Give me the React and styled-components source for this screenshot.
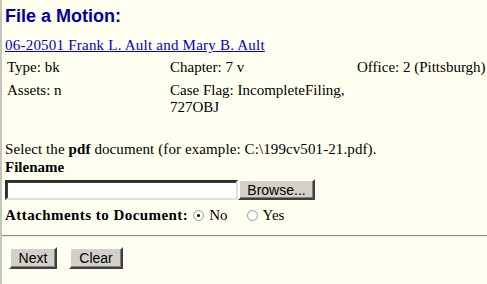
import React from 'react';
import styled, { createGlobalStyle } from 'styled-components';

const GlobalStyle = createGlobalStyle`
  html, body {
    margin: 0;
    padding: 0;
    background: #fffff0;
  }
  body {
    border-left: 2px solid #c4c4bc;
    min-height: 284px;
    box-sizing: border-box;
    font-family: "Liberation Serif", "Times New Roman", serif;
    font-size: 15px;
    line-height: 17px;
    color: #000;
  }
`;

const Page = styled.div`
  padding: 6px 0 0 3px;
`;

const Title = styled.h3`
  margin: 0;
  font-family: "Liberation Sans", Arial, sans-serif;
  font-size: 18px;
  line-height: 20px;
  font-weight: bold;
  color: #0000a0;
`;

const CaseLink = styled.a`
  display: inline-block;
  margin-top: 11px;
  color: #0000cc;
  text-decoration: underline;
  letter-spacing: 0.22px;
`;

const Info = styled.div`
  display: grid;
  grid-template-columns: 163px 187px auto;
  margin-top: 2px;
`;

const Cell = styled.div`
  padding: 3px 2px;
  white-space: nowrap;
`;

const Prompt = styled.p`
  margin: 22px 0 0;
  letter-spacing: 0.1px;
`;

const Label = styled.div`
  margin-top: 1px;
  font-weight: bold;
`;

const FileRow = styled.div`
  display: flex;
  align-items: center;
  margin-top: 3px;
  height: 21px;
`;

const FileInput = styled.div`
  width: 229px;
  height: 16px;
  background: #fff;
  border: 2px inset #a0a0a0;
  border-color: #808080 #e0e0e0 #e0e0e0 #808080;
  box-shadow: inset 1px 1px 0 #404040;
`;

const Button = styled.button`
  box-sizing: border-box;
  width: ${(p) => p.w}px;
  height: ${(p) => p.h}px;
  padding: 0;
  margin: 0;
  background: #d4d0c8;
  border: 2px solid;
  border-color: #ffffff #404040 #404040 #ffffff;
  box-shadow: inset -1px -1px 0 #808080;
  font-family: "Liberation Sans", Arial, sans-serif;
  font-size: ${(p) => p.fs || 14}px;
  color: #000;
`;

const AttachRow = styled.div`
  display: flex;
  align-items: center;
  margin-top: 5px;
  height: 20px;
`;

const AttachLabel = styled.b`
  letter-spacing: 0.45px;
`;

const Radio = styled.span`
  display: inline-block;
  box-sizing: border-box;
  width: 11px;
  height: 11px;
  margin: 0 5px 0 ${(p) => p.ml}px;
  border-radius: 50%;
  border: 1px solid #9a9a9a;
  background: #fff;
  position: relative;
  &::after {
    content: '';
    display: ${(p) => (p.checked ? 'block' : 'none')};
    position: absolute;
    left: 3px;
    top: 3px;
    width: 3px;
    height: 3px;
    border-radius: 50%;
    background: #000;
  }
`;

const Rule = styled.hr`
  margin: 10px 0 0 -3px;
  border: 0;
  border-top: 1px solid #8a8a80;
  border-bottom: 1px solid #f0f0e8;
  height: 0;
`;

const Actions = styled.div`
  display: flex;
  gap: 12px;
  margin: 10px 0 0 4px;
`;

export default function App() {
  return (
    <>
      <GlobalStyle />
      <Page>
        <Title>File a Motion:</Title>
        <CaseLink href="#">06-20501 Frank L. Ault and Mary B. Ault </CaseLink>
        <Info>
          <Cell>Type: bk</Cell>
          <Cell>Chapter: 7 v</Cell>
          <Cell>Office: 2 (Pittsburgh)</Cell>
          <Cell>Assets: n</Cell>
          <Cell>
            Case Flag: IncompleteFiling,
            <br />
            727OBJ
          </Cell>
          <Cell />
        </Info>
        <Prompt>
          Select the <b>pdf</b> document (for example: C:\199cv501-21.pdf).
        </Prompt>
        <Label>Filename</Label>
        <FileRow>
          <FileInput />
          <Button w={77} h={21} fs={14}>Browse...</Button>
        </FileRow>
        <AttachRow>
          <AttachLabel>Attachments to Document:</AttachLabel>
          <Radio ml={5} checked />No
          <Radio ml={19} />Yes
        </AttachRow>
        <Rule />
        <Actions>
          <Button w={48} h={22}>Next</Button>
          <Button w={54} h={22}>Clear</Button>
        </Actions>
      </Page>
    </>
  );
}
